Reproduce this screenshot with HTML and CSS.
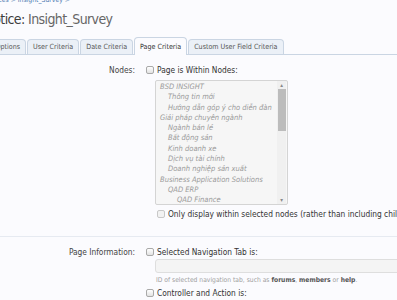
FILE: index.html
```html
<!DOCTYPE html>
<html lang="en">
<head>
  <meta charset="UTF-8">
  <title>Edit Notice: Insight_Survey</title>
  <link rel="stylesheet" href="styles.css">
</head>
<body>
  <div class="breadcrumb">
    <a href="#">Notices</a> &gt; <a href="#">Insight_Survey</a> &gt;
  </div>
  <h1 class="title">Edit Notice: <span class="title-name">Insight_Survey</span></h1>

  <ul class="tabs">
    <li class="tab">Notice Options</li>
    <li class="tab">User Criteria</li>
    <li class="tab">Date Criteria</li>
    <li class="tab active">Page Criteria</li>
    <li class="tab">Custom User Field Criteria</li>
  </ul>

  <div class="form-row">
    <div class="label">Nodes:</div>
    <div class="control">
      <label class="check"><input type="checkbox"> Page is Within Nodes:</label>
      <div class="nodes">
        <ul class="node-list">
          <li class="depth0">BSD INSIGHT</li>
          <li class="depth1">Thông tin mới</li>
          <li class="depth1">Hướng dẫn góp ý cho diễn đàn</li>
          <li class="depth0">Giải pháp chuyên ngành</li>
          <li class="depth1">Ngành bán lẻ</li>
          <li class="depth1">Bất động sản</li>
          <li class="depth1">Kinh doanh xe</li>
          <li class="depth1">Dịch vụ tài chính</li>
          <li class="depth1">Doanh nghiệp sản xuất</li>
          <li class="depth0">Business Application Solutions</li>
          <li class="depth1">QAD ERP</li>
          <li class="depth2">QAD Finance</li>
        </ul>
        <div class="scrollbar">
          <span class="arrow">&#9652;</span>
          <span class="thumb"></span>
          <span class="arrow down">&#9662;</span>
        </div>
      </div>
      <label class="check sub"><input type="checkbox"> Only display within selected nodes (rather than including child nodes)</label>
    </div>
  </div>

  <div class="form-row divided">
    <div class="label">Page Information:</div>
    <div class="control">
      <label class="check"><input type="checkbox"> Selected Navigation Tab is:</label>
      <input type="text" class="text-input">
      <p class="hint">ID of selected navigation tab, such as <b>forums</b>, <b>members</b> or <b>help</b>.</p>
      <label class="check"><input type="checkbox"> Controller and Action is:</label>
    </div>
  </div>
</body>
</html>
```

FILE: styles.css
```css
body {
  margin: 0;
  background-color: #fbfbfe;
  font-family: "DejaVu Sans Condensed", "DejaVu Sans", sans-serif;
  color: #333;
  overflow: hidden;
}
.breadcrumb {
  margin: -4px 0 0 -14px;
  font-size: 6.8px;
  line-height: 9px;
  color: #7d9cc2;
  white-space: nowrap;
}
.breadcrumb a {
  color: #4a78b0;
  text-decoration: none;
}
.title {
  margin: 3px 0 0 -41px;
  font-size: 14px;
  font-weight: normal;
  letter-spacing: -0.6px;
  line-height: 22px;
  color: #3d3d3d;
  white-space: nowrap;
}
.title-name {
  color: #666;
}
.tabs {
  display: flex;
  align-items: flex-end;
  gap: 1px;
  height: 17px;
  margin: 7px 0 0 -33px;
  padding: 0;
  list-style: none;
  border-bottom: 1px solid #cad5e3;
}
.tab {
  height: 14px;
  line-height: 14px;
  padding: 0 5px;
  font-size: 7.1px;
  color: #555;
  background-color: #ebf0f7;
  border: 1px solid #cad5e3;
  border-bottom: none;
  border-radius: 4px 4px 0 0;
  white-space: nowrap;
}
.tab.active {
  height: 17px;
  line-height: 18px;
  margin-bottom: -1px;
  background-color: #fbfbfe;
  color: #333;
}
.form-row {
  display: grid;
  grid-template-columns: 135px 1fr;
  column-gap: 11px;
  padding-top: 9px;
  font-size: 8.3px;
  white-space: nowrap;
}
.form-row.divided {
  margin-top: 16px;
  padding-top: 9px;
  border-top: 1px solid #e6eaf1;
}
.label {
  text-align: right;
  line-height: 12px;
  color: #444;
}
.check {
  display: flex;
  align-items: center;
  gap: 3px;
  height: 12px;
  line-height: 12px;
  color: #333;
}
.check input {
  appearance: none;
  box-sizing: border-box;
  flex: none;
  margin: 0;
  width: 8px;
  height: 8px;
  border: 1px solid #a9a9a9;
  border-radius: 2px;
  background: linear-gradient(#ffffff, #e2e2e2);
}
.check.sub {
  margin: 3px 0 0 11px;
}
.check.sub input {
  border-color: #c8c8c8;
  background: #f2f2f2;
}
.nodes {
  display: flex;
  box-sizing: border-box;
  width: 133px;
  height: 125px;
  margin: 4px 0 0 9px;
  background-color: #f6f6f6;
  border: 1px solid #d4d4d4;
  border-radius: 2px;
  overflow: hidden;
}
.node-list {
  flex: 1;
  margin: 0;
  padding: 1px 0 0 4px;
  list-style: none;
  font-size: 7.5px;
  font-style: italic;
  line-height: 10.3px;
  color: #9a9a9a;
  overflow: hidden;
}
.depth1 {
  padding-left: 8px;
}
.depth2 {
  padding-left: 17px;
}
.scrollbar {
  display: flex;
  flex-direction: column;
  align-items: center;
  width: 9px;
  margin-right: 1px;
  background-color: #f0f0f0;
}
.arrow {
  height: 8px;
  font-size: 6px;
  line-height: 8px;
  color: #888;
  font-style: normal;
}
.arrow.down {
  margin-top: auto;
}
.thumb {
  width: 8px;
  height: 42px;
  background-color: #bcbcbc;
}
.text-input {
  display: block;
  box-sizing: border-box;
  width: 250px;
  height: 14px;
  margin: 1px 0 0 9px;
  background-color: #f4f4f4;
  border: 1px solid #dedede;
  border-radius: 3px;
}
.hint {
  margin: 2px 0 2px 10px;
  font-size: 6.7px;
  line-height: 10px;
  color: #a0a0a0;
}
.hint b {
  color: #555;
}
```
